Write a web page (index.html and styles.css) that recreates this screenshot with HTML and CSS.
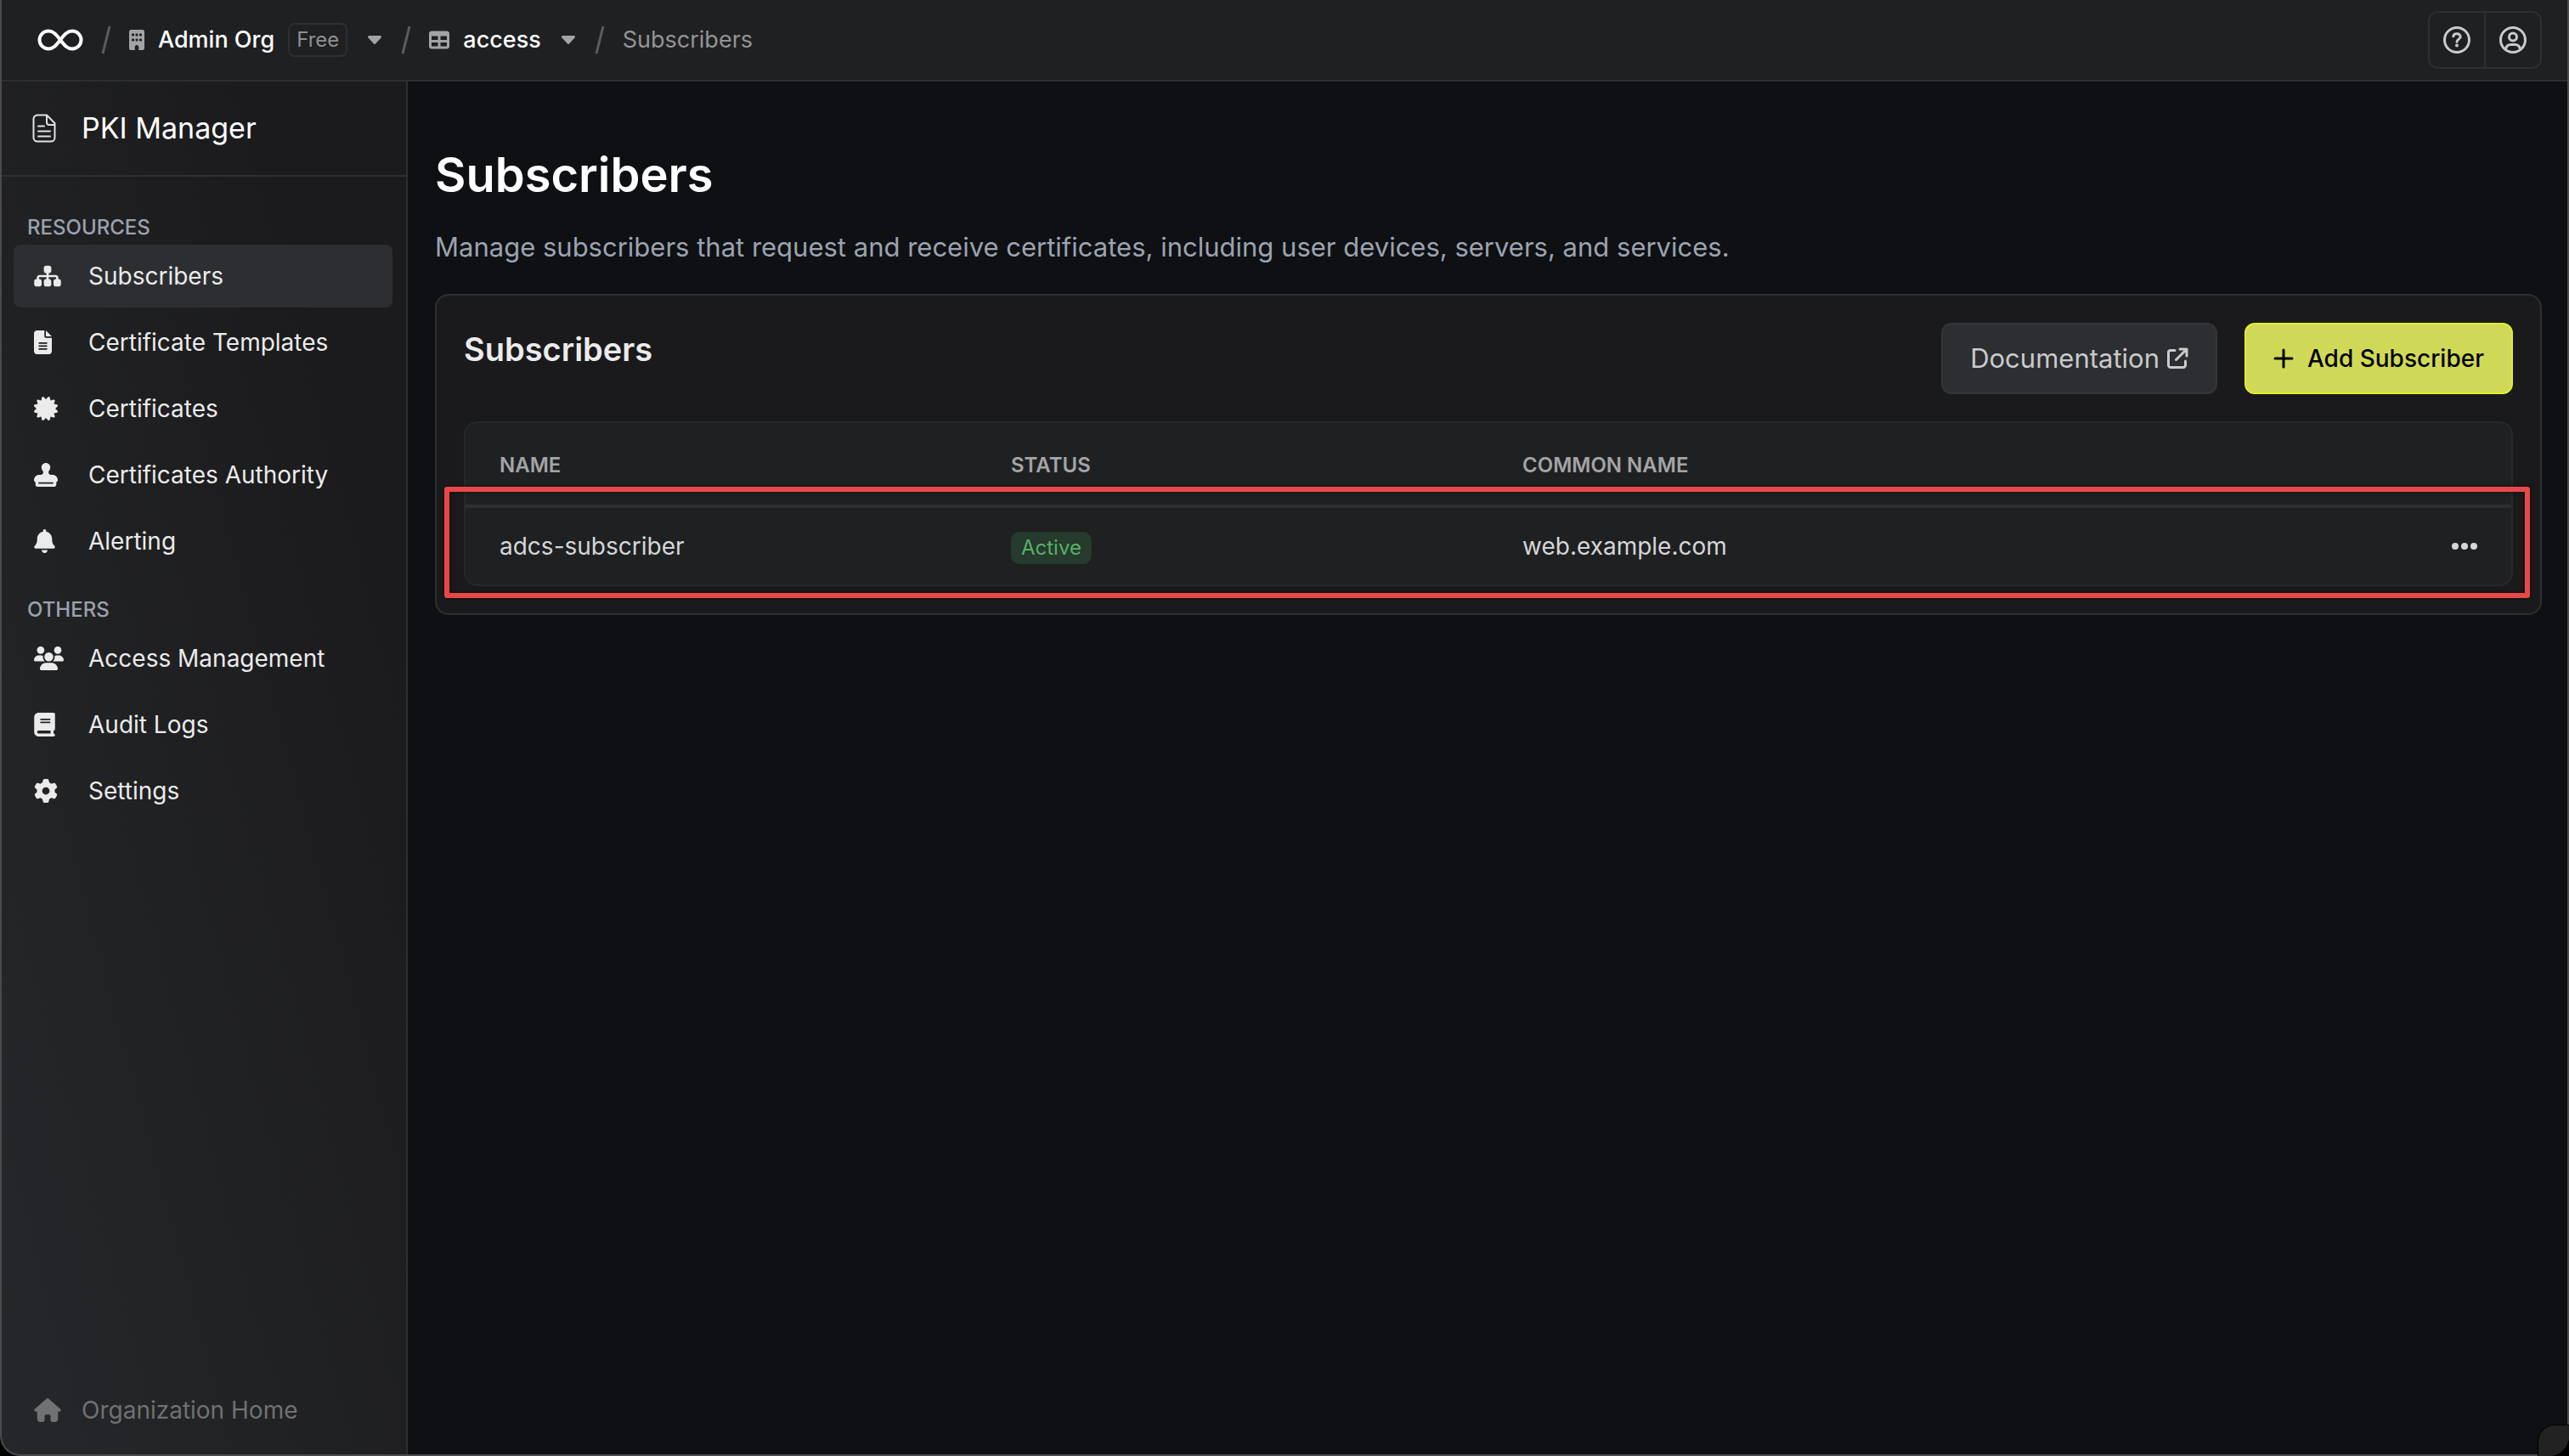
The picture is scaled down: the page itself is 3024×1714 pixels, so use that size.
FILE: index.html
```html
<!DOCTYPE html>
<html lang="en">
<head>
<meta charset="utf-8">
<title>Subscribers | PKI Manager</title>
<link rel="stylesheet" href="styles.css">
</head>
<body>
<div class="window">
  <header class="topbar">
    <a class="logo" href="#" aria-label="Home">
      <svg width="54" height="28" viewBox="0 0 54 28" fill="none" stroke="currentColor" stroke-width="4" stroke-linecap="round"><path d="M27 14C22 7.500 18.500 3.500 13 3.500a10.500 10.500 0 0 0 0 21C18.500 24.500 22 20.500 27 14S35.500 3.500 41 3.500a10.500 10.500 0 0 1 0 21C35.500 24.500 32 20.500 27 14Z"/></svg>
    </a>
    <svg class="slash" width="14" height="34" viewBox="0 0 14 34"><path d="M11 1 3 33" stroke="currentColor" stroke-width="3"/></svg>
    <a class="crumb crumb-org" href="#">
      <svg width="18" height="24" viewBox="0 0 384 512" fill="currentColor"><path d="M48 0C21.500 0 0 21.500 0 48V464c0 26.500 21.500 48 48 48h96V432c0-26.500 21.500-48 48-48s48 21.500 48 48v80h96c26.500 0 48-21.500 48-48V48c0-26.500-21.500-48-48-48H48zM64 240c0-8.800 7.200-16 16-16h32c8.800 0 16 7.200 16 16v32c0 8.800-7.200 16-16 16H80c-8.800 0-16-7.200-16-16V240zm112-16h32c8.800 0 16 7.200 16 16v32c0 8.800-7.200 16-16 16H176c-8.800 0-16-7.200-16-16V240c0-8.800 7.200-16 16-16zm80 16c0-8.800 7.200-16 16-16h32c8.800 0 16 7.200 16 16v32c0 8.800-7.200 16-16 16H272c-8.800 0-16-7.200-16-16V240zM80 96h32c8.800 0 16 7.200 16 16v32c0 8.800-7.200 16-16 16H80c-8.800 0-16-7.200-16-16V112c0-8.800 7.200-16 16-16zm80 16c0-8.800 7.200-16 16-16h32c8.800 0 16 7.200 16 16v32c0 8.800-7.200 16-16 16H176c-8.800 0-16-7.200-16-16V112zM272 96h32c8.800 0 16 7.200 16 16v32c0 8.800-7.200 16-16 16H272c-8.800 0-16-7.200-16-16V112c0-8.800 7.200-16 16-16z"/></svg>
      <span>Admin Org</span>
      <span class="plan">Free</span>
    </a>
    <button class="caret" aria-label="Switch organization"><svg width="16" height="10" viewBox="0 0 16 10" fill="currentColor"><path d="M1.500 0h13c1.300 0 2 1.500 1 2.500L9 9.400a1.400 1.400 0 0 1-2 0L.5 2.500C-.5 1.500.2 0 1.500 0Z"/></svg></button>
    <svg class="slash" width="14" height="34" viewBox="0 0 14 34"><path d="M11 1 3 33" stroke="currentColor" stroke-width="3"/></svg>
    <a class="crumb crumb-project" href="#">
      <svg width="24" height="24" viewBox="0 0 512 512" fill="currentColor"><path d="M64 256V160H224v96H64zm0 64H224v96H64V320zm224 96V320H448v96H288zM448 256H288V160H448v96zM64 32C28.700 32 0 60.700 0 96V416c0 35.300 28.700 64 64 64H448c35.300 0 64-28.700 64-64V96c0-35.300-28.700-64-64-64H64z"/></svg>
      <span>access</span>
    </a>
    <button class="caret" aria-label="Switch project"><svg width="16" height="10" viewBox="0 0 16 10" fill="currentColor"><path d="M1.500 0h13c1.300 0 2 1.500 1 2.500L9 9.400a1.400 1.400 0 0 1-2 0L.5 2.500C-.5 1.500.2 0 1.500 0Z"/></svg></button>
    <svg class="slash" width="14" height="34" viewBox="0 0 14 34"><path d="M11 1 3 33" stroke="currentColor" stroke-width="3"/></svg>
    <span class="crumb-current">Subscribers</span>
    <div class="tools">
      <button class="tool" aria-label="Help"><svg width="32" height="32" viewBox="0 0 32 32" fill="none" stroke="currentColor" stroke-width="3" stroke-linecap="round"><circle cx="16" cy="16" r="14.500"/><path d="M11.800 11.800c.4-1.900 1.700-3 3.700-3h1c2 0 3.700 1.500 3.700 3.500 0 2.600-4.200 3.200-4.200 6"/><circle cx="16" cy="22.500" r="2" fill="currentColor" stroke="none"/></svg></button>
      <button class="tool" aria-label="Account"><svg width="32" height="32" viewBox="0 0 32 32" fill="none" stroke="currentColor" stroke-width="3"><circle cx="16" cy="16" r="14.500"/><circle cx="16" cy="12.500" r="4.500"/><path d="M7.500 27c.6-3.600 3-5.500 6-5.500h5c3 0 5.400 1.900 6 5.500"/></svg></button>
    </div>
  </header>

  <div class="body">
    <aside class="sidebar">
      <div class="product">
        <svg width="28" height="34" viewBox="0 0 28 34" fill="none" stroke="currentColor" stroke-width="2" stroke-linecap="round" stroke-linejoin="round"><path d="M17 1.500H6A4.500 4.500 0 0 0 1.500 6v22A4.500 4.500 0 0 0 6 32.500h16a4.500 4.500 0 0 0 4.500-4.500V11ZM17 1.500V10a3 3 0 0 0 3 3h6.500"/><path d="M7 14.500h7M7 20.500h14M7 26.500h14"/></svg>
        <span>PKI Manager</span>
      </div>
      <nav class="nav">
        <h3 class="nav-title">Resources</h3>
        <a class="item active" href="#"><span class="icon"><svg width="32" height="28" viewBox="0 0 576 512" fill="currentColor"><path d="M208 80c0-26.500 21.500-48 48-48h64c26.500 0 48 21.500 48 48v64c0 26.500-21.500 48-48 48h-8v40H464c30.900 0 56 25.100 56 56v32h8c26.500 0 48 21.500 48 48v64c0 26.500-21.500 48-48 48H464c-26.500 0-48-21.500-48-48V368c0-26.500 21.500-48 48-48h8V288c0-4.400-3.600-8-8-8H312v40h8c26.500 0 48 21.500 48 48v64c0 26.500-21.500 48-48 48H256c-26.500 0-48-21.500-48-48V368c0-26.500 21.500-48 48-48h8V280H112c-4.400 0-8 3.600-8 8v32h8c26.500 0 48 21.500 48 48v64c0 26.500-21.500 48-48 48H48c-26.500 0-48-21.500-48-48V368c0-26.500 21.500-48 48-48h8V288c0-30.900 25.100-56 56-56H264V192h-8c-26.500 0-48-21.500-48-48V80z"/></svg></span>Subscribers</a>
        <a class="item" href="#"><span class="icon"><svg width="21" height="28" viewBox="0 0 384 512" fill="currentColor"><path d="M64 0C28.700 0 0 28.700 0 64V448c0 35.300 28.700 64 64 64H320c35.300 0 64-28.700 64-64V160H256c-17.700 0-32-14.300-32-32V0H64zM256 0V128H384L256 0zM112 256H272c8.800 0 16 7.200 16 16s-7.200 16-16 16H112c-8.800 0-16-7.200-16-16s7.200-16 16-16zm0 64H272c8.800 0 16 7.200 16 16s-7.200 16-16 16H112c-8.800 0-16-7.200-16-16s7.200-16 16-16zm0 64H272c8.800 0 16 7.200 16 16s-7.200 16-16 16H112c-8.800 0-16-7.200-16-16s7.200-16 16-16z"/></svg></span>Certificate Templates</a>
        <a class="item" href="#"><span class="icon"><svg width="28" height="28" viewBox="0 0 512 512" fill="currentColor"><path d="M211 7.300C205 1 196-1.400 187.600 .8s-14.900 8.900-17.100 17.300L154.700 80.600l-62-17.500c-8.400-2.400-17.400 0-23.500 6.100s-8.500 15.100-6.100 23.500l17.500 62L18.100 170.600c-8.400 2.100-15 8.700-17.300 17.100S1 205 7.300 211l46.200 45L7.300 301C1 307-1.400 316 .8 324.400s8.900 14.900 17.300 17.100l62.500 15.800-17.500 62c-2.400 8.400 0 17.400 6.100 23.500s15.100 8.500 23.500 6.100l62-17.500 15.800 62.500c2.100 8.400 8.700 15 17.100 17.300s17.300-.2 23.400-6.400l45-46.200 45 46.200c6.100 6.200 15 8.700 23.400 6.400s14.900-8.900 17.100-17.300l15.800-62.500 62 17.500c8.400 2.400 17.400 0 23.500-6.100s8.500-15.100 6.100-23.500l-17.500-62 62.500-15.800c8.400-2.100 15-8.700 17.300-17.100s-.2-17.400-6.400-23.400l-46.200-45 46.200-45c6.200-6.100 8.700-15 6.400-23.400s-8.900-14.900-17.300-17.100l-62.500-15.800 17.500-62c2.400-8.400 0-17.400-6.100-23.500s-15.100-8.500-23.500-6.100l-62 17.500L341.400 18.100c-2.100-8.400-8.700-15-17.100-17.300S307 1 301 7.300L256 53.500 211 7.300z"/></svg></span>Certificates</a>
        <a class="item" href="#"><span class="icon"><svg width="28" height="28" viewBox="0 0 512 512" fill="currentColor"><path d="M312 201.800c0-17.400 9.200-33.200 19.900-47C344.500 138.500 352 118.100 352 96c0-53-43-96-96-96s-96 43-96 96c0 22.100 7.500 42.500 20.100 58.800c10.700 13.800 19.900 29.600 19.900 47c0 29.900-24.300 54.200-54.200 54.200H112C50.100 256 0 306.100 0 368c0 20.900 13.400 38.700 32 45.300V464c0 26.500 21.500 48 48 48H432c26.500 0 48-21.500 48-48V413.300c18.600-6.600 32-24.400 32-45.300c0-61.900-50.100-112-112-112H366.200c-29.900 0-54.200-24.300-54.200-54.200zM416 416v32H96V416H416z"/></svg></span>Certificates Authority</a>
        <a class="item" href="#"><span class="icon"><svg width="25" height="28" viewBox="0 0 448 512" fill="currentColor"><path d="M224 0c-17.700 0-32 14.300-32 32V51.200C119 66 64 130.600 64 208v18.800c0 47-17.300 92.400-48.500 127.600l-7.400 8.300c-8.400 9.400-10.400 22.900-5.300 34.400S19.400 416 32 416H416c12.600 0 24-7.400 29.200-18.900s3.100-25-5.300-34.400l-7.400-8.300C401.300 319.200 384 273.900 384 226.800V208c0-77.400-55-142-128-156.800V32c0-17.700-14.300-32-32-32zm45.300 493.300c12-12 18.700-28.300 18.700-45.300H160c0 17 6.700 33.300 18.700 45.300s28.300 18.700 45.300 18.700s33.300-6.700 45.300-18.700z"/></svg></span>Alerting</a>
        <h3 class="nav-title">Others</h3>
        <a class="item" href="#"><span class="icon"><svg width="35" height="28" viewBox="0 0 640 512" fill="currentColor"><path d="M144 0a80 80 0 1 1 0 160A80 80 0 1 1 144 0zM512 0a80 80 0 1 1 0 160A80 80 0 1 1 512 0zM0 298.700C0 239.800 47.800 192 106.700 192h42.700c15.900 0 31 3.500 44.600 9.700c-1.300 7.200-1.900 14.700-1.900 22.300c0 38.200 16.800 72.500 43.300 96c-.2 0-.4 0-.7 0H21.300C9.600 320 0 310.400 0 298.700zM405.300 320c-.2 0-.4 0-.7 0c26.600-23.500 43.300-57.800 43.300-96c0-7.600-.7-15-1.900-22.300c13.600-6.300 28.700-9.700 44.600-9.700h42.700C592.200 192 640 239.800 640 298.700c0 11.800-9.600 21.300-21.300 21.300H405.300zM224 224a96 96 0 1 1 192 0 96 96 0 1 1-192 0zM128 485.300C128 411.700 187.700 352 261.300 352H378.700C452.300 352 512 411.700 512 485.300c0 14.700-11.900 26.700-26.700 26.700H154.700c-14.700 0-26.700-11.900-26.700-26.700z"/></svg></span>Access Management</a>
        <a class="item" href="#"><span class="icon"><svg width="25" height="28" viewBox="0 0 448 512" fill="currentColor"><path d="M96 0C43 0 0 43 0 96V416c0 53 43 96 96 96H384h32c17.700 0 32-14.300 32-32s-14.300-32-32-32V384c17.700 0 32-14.300 32-32V32c0-17.700-14.300-32-32-32H384 96zm0 384H352v64H96c-17.700 0-32-14.300-32-32s14.300-32 32-32zm32-240c0-8.800 7.200-16 16-16H336c8.800 0 16 7.200 16 16s-7.200 16-16 16H144c-8.800 0-16-7.200-16-16zm16 48H336c8.800 0 16 7.200 16 16s-7.200 16-16 16H144c-8.800 0-16-7.200-16-16s7.200-16 16-16z"/></svg></span>Audit Logs</a>
        <a class="item" href="#"><span class="icon"><svg width="28" height="28" viewBox="0 0 512 512" fill="currentColor"><path d="M495.900 166.600c3.200 8.700 .5 18.400-6.400 24.600l-43.300 39.400c1.100 8.300 1.700 16.800 1.700 25.400s-.6 17.100-1.700 25.400l43.300 39.400c6.900 6.200 9.600 15.900 6.400 24.600c-4.400 11.900-9.700 23.300-15.800 34.300l-4.700 8.100c-6.600 11-14 21.400-22.100 31.200c-5.900 7.200-15.700 9.600-24.500 6.800l-55.700-17.700c-13.400 10.300-28.200 18.900-44 25.400l-12.500 57.100c-2 9.100-9 16.300-18.200 17.800c-13.800 2.300-28 3.500-42.500 3.500s-28.700-1.200-42.500-3.500c-9.200-1.500-16.200-8.700-18.200-17.800l-12.500-57.100c-15.800-6.500-30.600-15.100-44-25.400L83.100 425.900c-8.800 2.800-18.600 .3-24.500-6.800c-8.100-9.800-15.500-20.200-22.100-31.200l-4.700-8.100c-6.100-11-11.400-22.400-15.800-34.300c-3.200-8.700-.5-18.400 6.400-24.600l43.300-39.400C64.600 273.100 64 264.600 64 256s.6-17.100 1.700-25.400L22.400 191.200c-6.900-6.200-9.600-15.900-6.400-24.600c4.400-11.900 9.700-23.300 15.800-34.300l4.700-8.100c6.600-11 14-21.400 22.100-31.200c5.900-7.200 15.700-9.600 24.500-6.800l55.700 17.700c13.400-10.300 28.200-18.900 44-25.400l12.500-57.100c2-9.100 9-16.300 18.200-17.800C227.300 1.200 241.500 0 256 0s28.700 1.200 42.500 3.500c9.200 1.500 16.200 8.700 18.200 17.800l12.500 57.100c15.800 6.500 30.600 15.100 44 25.400l55.700-17.700c8.800-2.800 18.600-.3 24.500 6.800c8.100 9.800 15.500 20.200 22.100 31.200l4.700 8.100c6.100 11 11.400 22.400 15.800 34.300zM256 336a80 80 0 1 0 0-160 80 80 0 1 0 0 160z"/></svg></span>Settings</a>
      </nav>
      <a class="home" href="#">
        <svg width="32" height="28" viewBox="0 0 576 512" fill="currentColor"><path d="M575.800 255.500c0 18-15 32.100-32 32.100h-32l.7 160.200c0 35.400-28.600 64.200-64 64.200h-56c-22.100 0-40-17.900-40-40V384c0-17.700-14.300-32-32-32H256c-17.700 0-32 14.300-32 32v88c0 22.100-17.900 40-40 40H128c-35.300 0-64-28.700-64-64V287.600H32c-18 0-32-14-32-32.100c0-9 3-17 10-24L266.400 8c7-7 15-8 22-8s15 2 21 7L564.800 231.500c8 7 12 15 11 24z"/></svg>
        <span>Organization Home</span>
      </a>
    </aside>

    <main class="main">
      <h1 class="title">Subscribers</h1>
      <p class="lead">Manage subscribers that request and receive certificates, including user devices, servers, and services.</p>
      <section class="card">
        <div class="card-head">
          <h2 class="card-title">Subscribers</h2>
          <div class="actions">
            <a class="btn btn-docs" href="#"><span>Documentation</span><svg width="26" height="26" viewBox="0 0 26 26" fill="none" stroke="currentColor" stroke-width="3" stroke-linecap="round" stroke-linejoin="round"><path d="M10 3.500H5A2.500 2.500 0 0 0 2.500 6v15A2.500 2.500 0 0 0 5 23.500h15a2.500 2.500 0 0 0 2.500-2.500v-5M16 2h8v8M24 2 11.500 14.500"/></svg></a>
            <button class="btn btn-add"><svg width="24" height="24" viewBox="0 0 24 24" fill="none" stroke="currentColor" stroke-width="3" stroke-linecap="round"><path d="M12 2v20M2 12h20"/></svg><span>Add Subscriber</span></button>
          </div>
        </div>
        <div class="table-wrap">
          <table class="table">
            <thead><tr><th>Name</th><th>Status</th><th>Common Name</th><th></th></tr></thead>
            <tbody>
              <tr>
                <td>adcs-subscriber</td>
                <td><span class="badge">Active</span></td>
                <td>web.example.com</td>
                <td><button class="menu" aria-label="Row actions"><svg width="30" height="8" viewBox="0 0 30 8" fill="currentColor"><circle cx="4" cy="4" r="4"/><circle cx="15" cy="4" r="4"/><circle cx="26" cy="4" r="4"/></svg></button></td>
              </tr>
            </tbody>
          </table>
          <div class="highlight"></div>
        </div>
      </section>
    </main>
  </div>
  <div class="corner"></div>
</div>
</body>
</html>
```

FILE: styles.css
```css
* { box-sizing: border-box; }

body {
  margin: 0;
  background: #000;
  color: #ebebeb;
  font: 400 28px/40px Inter, "Liberation Sans", sans-serif;
}

a { color: inherit; text-decoration: none; }
h1, h2, h3, p { margin: 0; }
svg { display: block; flex: none; }

button {
  padding: 0;
  border: 0;
  background: none;
  color: inherit;
  font: inherit;
}

/* window frame */
.window {
  position: relative;
  display: flex;
  flex-direction: column;
  min-height: 100vh;
  background: #0e1014;
  border-radius: 0 0 24px 24px;
  overflow: hidden;
}

.window::after {
  content: "";
  position: absolute;
  inset: 0;
  border: solid #4b4b4e;
  border-width: 0 2px 2px;
  border-radius: 0 0 24px 24px;
  pointer-events: none;
}

/* top bar */
.topbar {
  display: flex;
  align-items: center;
  height: 96px;
  padding: 0 32px 0 44px;
  background: #1f2022;
  border-bottom: 2px solid #2d2f33;
  font-size: 27px;
}

.logo { color: #fff; }
.slash { margin: 0 20px; color: #5c5d5f; }

.crumb {
  display: flex;
  align-items: center;
  gap: 16px;
  color: #fff;
  font-weight: 500;
}

.crumb svg { color: #a3a4a6; }

.plan {
  padding: 0 8px;
  border: 2px solid #2d2f33;
  border-radius: 8px;
  color: #8f9092;
  font-size: 24px;
  font-weight: 400;
  line-height: 36px;
}

.caret { margin: 0 2px 0 24px; color: #a3a4a6; }
.crumb-current { color: #939496; }

.tools {
  display: flex;
  margin-left: auto;
  border: 2px solid #2d2f33;
  border-radius: 12px;
}

.tool {
  display: grid;
  place-items: center;
  width: 64px;
  height: 64px;
  color: #c9cacc;
}

.tool + .tool { width: 66px; border-left: 2px solid #2d2f33; }

.body { display: flex; flex: 1; }

/* sidebar */
.sidebar {
  display: flex;
  flex-direction: column;
  width: 480px;
  flex: none;
  background: linear-gradient(75deg, #26272b, #222325 30%, #1b1b1d 80%);
  border-right: 2px solid #2d2f33;
}

.product {
  display: flex;
  align-items: center;
  gap: 30px;
  height: 112px;
  padding-left: 38px;
  border-bottom: 2px solid #2d2f33;
  color: #fff;
  font-size: 34px;
}

.product svg { color: #e0e1e3; }

.nav {
  display: flex;
  flex-direction: column;
  gap: 4px;
  padding: 40px 16px;
}

.nav-title {
  padding: 4px 16px 0;
  color: #9ca1ae;
  font-size: 24px;
  font-weight: 500;
  line-height: 32px;
  text-transform: uppercase;
}

.item + .nav-title { margin-top: 20px; }

.item {
  display: flex;
  align-items: center;
  height: 74px;
  padding: 0 24px;
  border-radius: 8px;
}

.active { background: #2d2e32; }
.icon { width: 64px; }

.home {
  display: flex;
  align-items: center;
  gap: 24px;
  margin-top: auto;
  padding: 32px 40px 34px;
  color: #707173;
}

/* content */
.main { flex: 1; padding: 72px 32px; }

.title {
  color: #fff;
  font-size: 56px;
  font-weight: 600;
  line-height: 76px;
}

.lead {
  margin: 24px 0 32px;
  color: #9ca3af;
  font-size: 31px;
  line-height: 46px;
}

.card {
  padding: 32px;
  background: #1a1a1c;
  border: 2px solid #2d2f33;
  border-radius: 16px;
}

.card-head {
  display: flex;
  justify-content: space-between;
  margin-bottom: 32px;
}

.card-title {
  font-size: 38px;
  font-weight: 600;
  line-height: 62px;
}

.actions { display: flex; gap: 32px; }

.btn {
  display: flex;
  align-items: center;
  height: 84px;
  padding: 0 32px;
  border: 2px solid #33353a;
  border-radius: 12px;
}

.btn-docs {
  gap: 8px;
  background: #2d2e32;
  color: #c9cacc;
  font-size: 31px;
}

.btn-add {
  gap: 16px;
  background: #d0d957;
  border-color: #e0ed34;
  color: #000;
  font-weight: 500;
}

.table-wrap {
  position: relative;
  background: #1f2022;
  border: 2px solid #26282b;
  border-radius: 16px;
}

.table {
  width: 100%;
  border-collapse: separate;
  border-spacing: 0;
  table-layout: fixed;
}

.table th {
  height: 100px;
  padding: 4px 40px 0;
  border-bottom: 4px solid #2d2f33;
  color: #a3a4a6;
  font-size: 24px;
  font-weight: 600;
  text-align: left;
  text-transform: uppercase;
}

.table td {
  height: 90px;
  padding: 0 40px;
  color: #d5d6d8;
}

.menu { display: block; margin-left: auto; }

.badge {
  display: inline-block;
  padding: 0 12px;
  border-radius: 10px;
  background: #263a2d;
  color: #56b068;
  font-size: 24px;
  line-height: 38px;
  vertical-align: middle;
}

/* marks the row, over the table */
.highlight {
  position: absolute;
  inset: 75px -22px -16px -25px;
  border: 6px solid #e94848;
  border-radius: 3px;
  box-shadow: 0 0 4px #0008, inset 0 0 4px #0008;
  pointer-events: none;
}

.corner {
  position: absolute;
  right: 0;
  bottom: 0;
  z-index: 1;
  width: 37px;
  height: 37px;
  border: solid #000;
  border-width: 1px 0 0 1px;
  border-radius: 20px 0 0 0;
  background: #222;
}
```
